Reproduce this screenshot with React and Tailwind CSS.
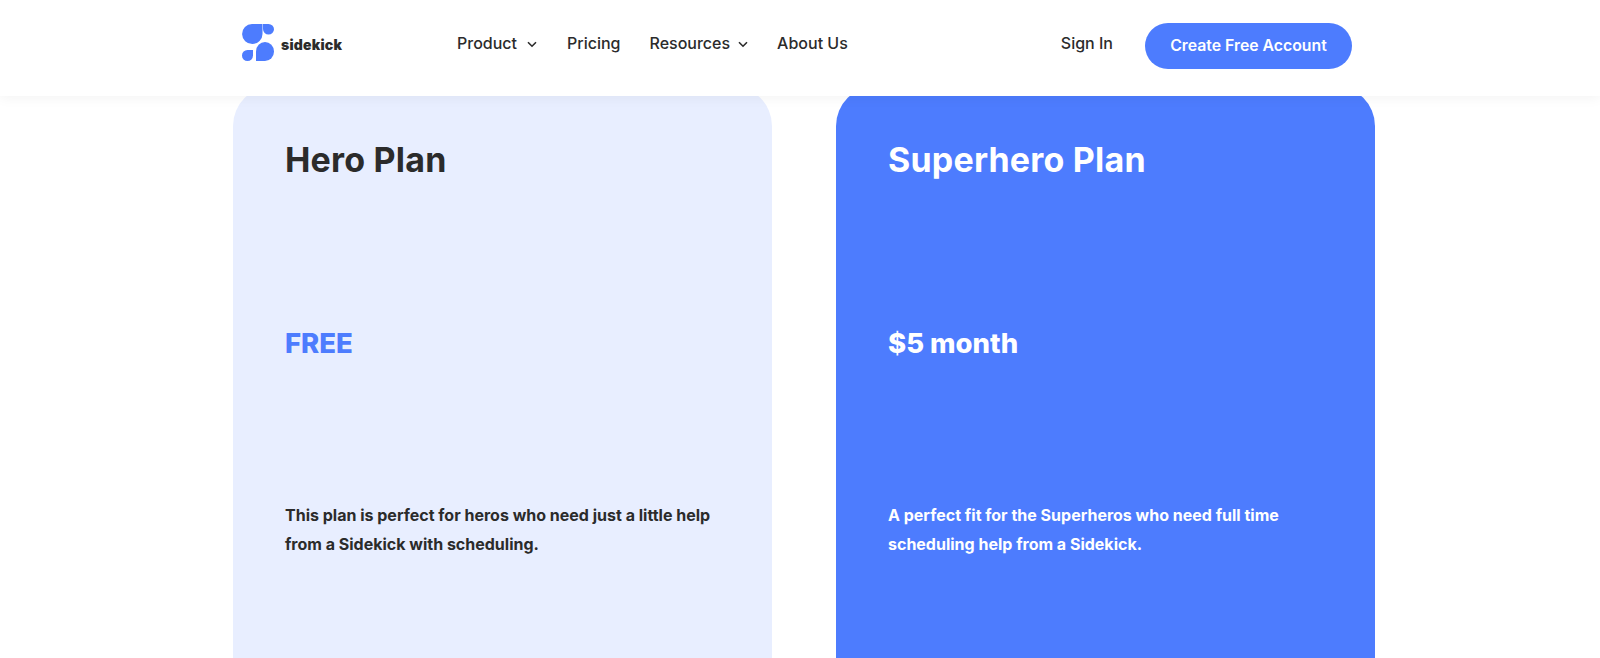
const font = { fontFamily: '"Inter", "Liberation Sans", sans-serif' };

function Chevron({ className }) {
  return (
    <svg width="10" height="7" viewBox="0 0 10 7" fill="none" className={className}>
      <path d="M1 1.2 5 5.2 9 1.2" stroke="#2b2b2b" strokeWidth="1.6" />
    </svg>
  );
}

function Logo() {
  return (
    <div className="flex w-[215px] items-center">
      <svg width="32" height="37" viewBox="0 0 32 37" className="mb-0.5">
        <path d="M10 0H20.500V10A10.200 10 0 1 1 10 0Z" fill="#4d7cfe" />
        <path d="M21 0H26.500A5.500 5.250 0 0 1 26.500 10.500A5.500 5.500 0 0 1 21 5Z" fill="#4d7cfe" />
        <path d="M5.500 26H11V31.500A5.500 5.500 0 1 1 5.500 26Z" fill="#4d7cfe" />
        <path d="M14 37V27.500A9 9.500 0 1 1 23 37Z" fill="#4d7cfe" />
      </svg>
      <span className="ml-[7px] mt-0.5 text-[14px] font-black tracking-[0.2px] text-[#2b2b2b]">sidekick</span>
    </div>
  );
}

function Card({ dark, title, price, text }) {
  return (
    <div className={`h-[590px] w-[539px] rounded-t-[40px] pl-[52px] pr-[40px] ${dark ? "bg-[#4d7cfe] text-white" : "bg-[#e8eeff] text-[#2b2b2b]"}`}>
      <h2 className="mt-[52px] text-[34px] font-bold leading-[44px] tracking-[0.2px]">{title}</h2>
      <p className={`mt-[144px] text-[27.500px] font-extrabold leading-[34px] ${dark ? "text-white" : "text-[#4d7cfe]"}`}>{price}</p>
      <p className="mt-[141px] text-[16px] font-bold leading-[29px]">{text}</p>
    </div>
  );
}

export default function App() {
  return (
    <div style={font} className="h-[658px] overflow-hidden bg-white">
      <header className="relative z-10 flex h-[96px] items-center bg-white pb-[10px] pl-[242px] shadow-[0_2px_12px_rgba(0,0,0,0.05)]">
        <Logo />
        <nav className="flex items-center gap-[29px] text-[16px] font-medium text-[#2b2b2b]">
          <span className="flex items-center">Product<Chevron className="ml-2.5 mr-px mt-0.5" /></span>
          <span>Pricing</span>
          <span className="flex items-center">Resources<Chevron className="ml-2 mt-0.5" /></span>
          <span>About Us</span>
        </nav>
        <span className="ml-[213px] text-[16px] font-medium text-[#2b2b2b]">Sign In</span>
        <button className="ml-8 mt-1.5 h-[46px] w-[207px] rounded-full bg-[#4d7cfe] text-[15.800px] font-semibold text-white">Create Free Account</button>
      </header>
      <main className="-mt-[10px] flex gap-[64px] pl-[233px]">
        <Card title="Hero Plan" price="FREE" text="This plan is perfect for heros who need just a little help from a Sidekick with scheduling." />
        <Card dark title="Superhero Plan" price="$5 month" text="A perfect fit for the Superheros who need full time scheduling help from a Sidekick." />
      </main>
    </div>
  );
}
